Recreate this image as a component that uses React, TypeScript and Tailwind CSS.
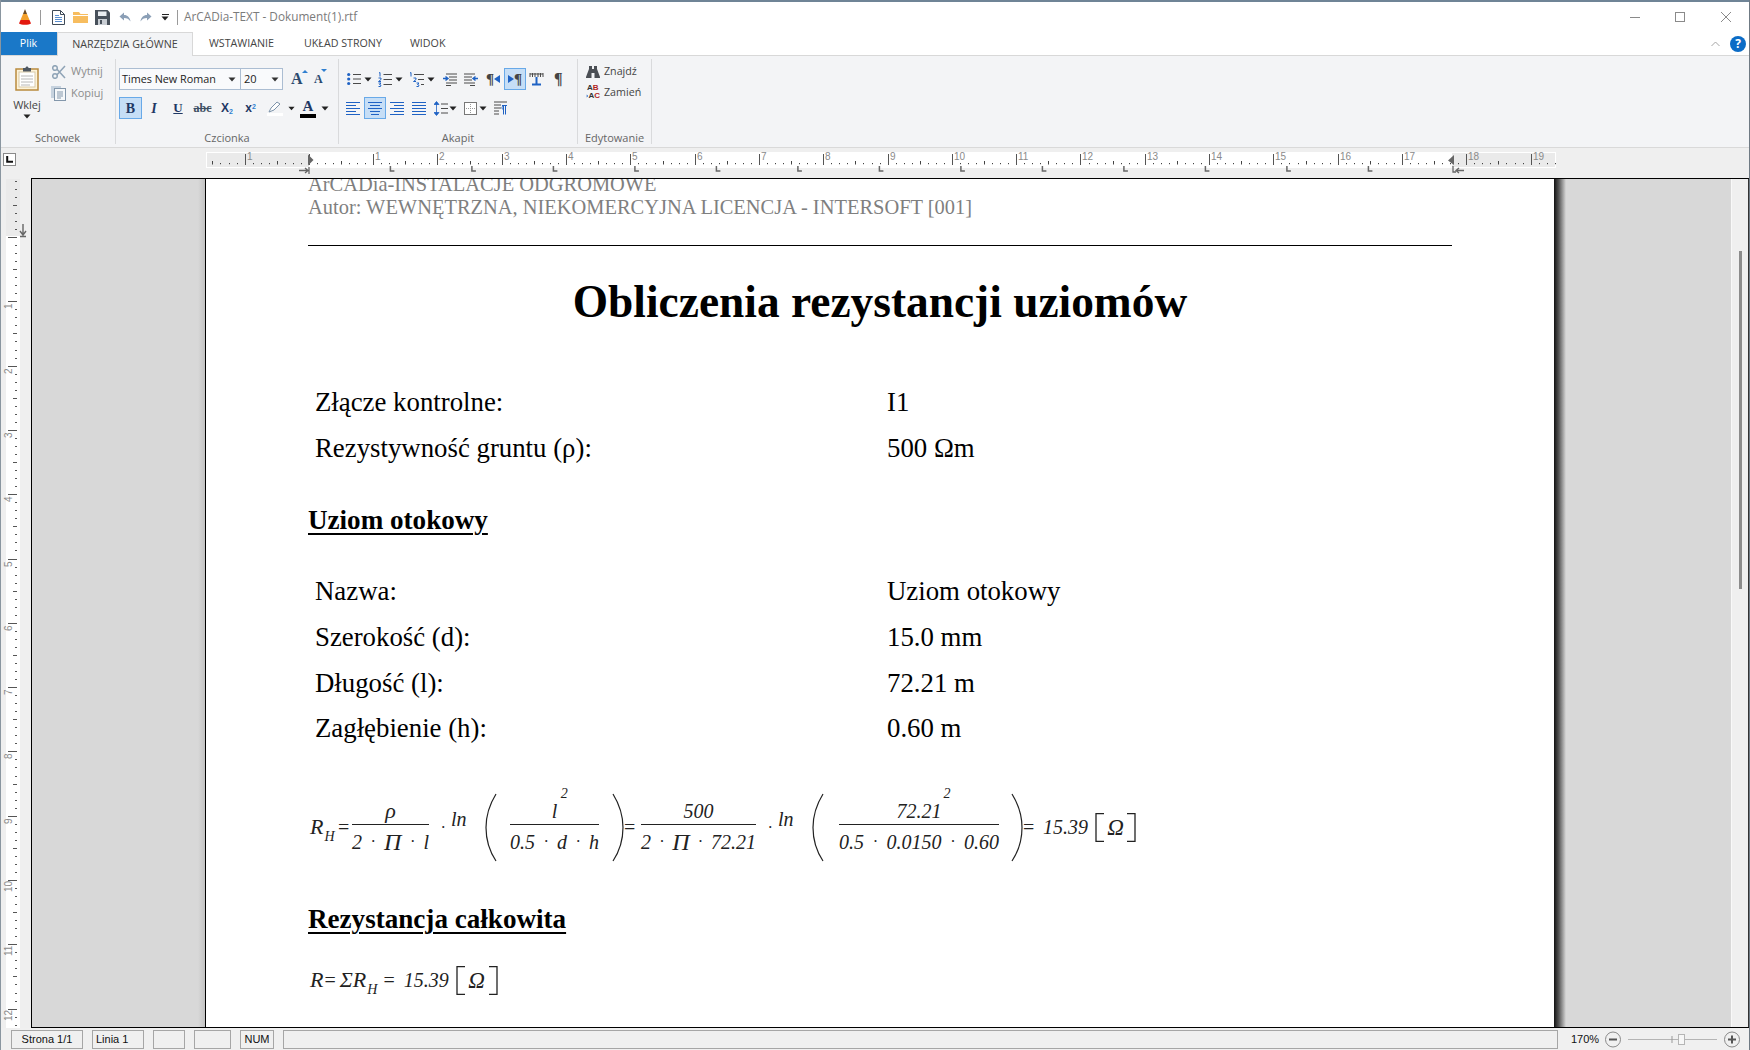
import React from "react";

const BL = "#1f62c4";
const DG = "#4a4a4a";

const Caret = ({ c = "#222" }: { c?: string }) => (
  <svg width="8" height="5" viewBox="0 0 8 5"><path d="M0.5 0.5H7.5L4 4.5Z" fill={c} /></svg>
);

const Cone = () => (
  <svg width="14" height="16" viewBox="0 0 14 16">
    <path d="M7 0 L9 5 H5Z" fill="#6b4a22" />
    <path d="M5 5H9L11.5 11H2.5Z" fill="#f3a02b" />
    <path d="M2.5 11H11.5L13 14.5C11 16.2 3 16.2 1 14.5Z" fill="#e3190f" />
  </svg>
);
const DocIcon = () => (
  <svg width="13" height="15" viewBox="0 0 13 15">
    <path d="M1 .5H8.5L12.5 4.5V14.5H.5V.5Z" fill="#fff" stroke="#3f4b58" />
    <path d="M8.5 .5V4.5H12.5" fill="none" stroke="#3f4b58" />
    <path d="M3 5.5H7M3 7.5H10M3 9.5H10M3 11.5H10" stroke="#5b8fd0" />
  </svg>
);
const FolderIcon = () => (
  <svg width="15" height="12" viewBox="0 0 15 12">
    <path d="M0 1H6L7.5 3H15V12H0Z" fill="#f7bd5f" />
    <path d="M0 4.5H15" stroke="#fff" />
  </svg>
);
const SaveIcon = () => (
  <svg width="15" height="15" viewBox="0 0 15 15">
    <path d="M0 0H12.5L15 2.5V15H0Z" fill="#48515b" />
    <rect x="3" y="1.5" width="8.5" height="4.5" fill="#e9edf1" />
    <rect x="3" y="9" width="9" height="6" fill="#c9ced4" />
    <rect x="5" y="10" width="2" height="4" fill="#48515b" />
  </svg>
);
const Arrow = ({ flip }: { flip?: boolean }) => (
  <svg width="12" height="10" viewBox="0 0 12 10" className={flip ? "-scale-x-100" : ""}>
    <path d="M5 0.5 L0.5 4.5 L5 8.5 V6 C8 6 10 7 11.5 9.5 C11 5.5 8.5 3 5 3Z" fill="#8b9fb6" />
  </svg>
);
const Clipboard = () => (
  <svg width="24" height="25" viewBox="0 0 24 25">
    <rect x="1" y="3" width="22" height="21" fill="#fdf3d9" stroke="#b98a3e" strokeWidth="1.5" />
    <rect x="4" y="6" width="16" height="15" fill="#fff" stroke="#d8c9a8" />
    <path d="M6 10H18M6 13H18M6 16H18M6 19H15" stroke="#b8b8b8" />
    <path d="M8 3.5V2H10.5C10.5 0 13.5 0 13.5 2H16V5.5H8Z" fill="#4e5761" />
  </svg>
);
const Scissors = () => (
  <svg width="14" height="14" viewBox="0 0 14 14" fill="none" stroke="#8ea3b6" strokeWidth="1.5">
    <circle cx="3" cy="3" r="2.3" />
    <circle cx="3" cy="11" r="2.3" />
    <path d="M5 4.2 L13 13M5 9.8 L13 1" />
  </svg>
);
const CopyIcon = () => (
  <svg width="15" height="15" viewBox="0 0 15 15">
    <rect x="0" y="0" width="10" height="12" fill="#c6d2de" />
    <rect x="3.5" y="2.5" width="11" height="12" fill="#f6f8fa" stroke="#8397ab" />
    <path d="M6 6H12M6 8H12M6 10H12M6 12H10" stroke="#8397ab" />
  </svg>
);
const Bullets = () => (
  <svg width="14" height="14" viewBox="0 0 14 14">
    <circle cx="1.7" cy="2.5" r="1.6" fill={BL} /><circle cx="1.7" cy="7" r="1.6" fill={BL} /><circle cx="1.7" cy="11.5" r="1.6" fill={BL} />
    <path d="M6 2.5H14M6 7H14M6 11.5H14" stroke={DG} />
  </svg>
);
const Numbered = () => (
  <svg width="14" height="15" viewBox="0 0 14 15">
    <path d="M1 1L2 .5V4.5M.5 6H3V7.5L.5 9.5H3M.5 11H3L1.5 12.5L3 13.2L2.5 14.5H.5" stroke={BL} fill="none" />
    <path d="M5.5 2.5H14M5.5 7.5H14M5.5 12.5H14" stroke={DG} />
  </svg>
);
const Multi = () => (
  <svg width="14" height="15" viewBox="0 0 14 15">
    <path d="M0 1L1 .5V4.5M3.5 6H6V7.5L3.5 9.5H6M6.5 11H9L7.5 12.5L9 13.2L8.5 14.5H6.5" stroke={BL} fill="none" />
    <path d="M4 2.5H14M8 7.5H14M11 12.5H14" stroke={DG} />
  </svg>
);
const Indent = ({ rev }: { rev?: boolean }) => (
  <svg width="14" height="13" viewBox="0 0 14 13" className={rev ? "-scale-x-100" : ""}>
    <path d="M3 1H14M6 4H14M6 7H14M3 10H14M3 12.5H8" stroke={DG} />
    <path d="M0 5.5H4M2.5 3.5L5 5.5L2.5 7.5" stroke={BL} fill="none" strokeWidth="1.4" />
  </svg>
);
const AlignIcon = ({ kind }: { kind: "l" | "c" | "r" | "j" }) => {
  const d = {
    l: "M0 1.5H14M0 4.5H10M0 7.5H14M0 10.5H10M0 13.5H14",
    c: "M0 1.5H14M2 4.5H12M0 7.5H14M2 10.5H12M3 13.5H11",
    r: "M0 1.5H14M4 4.5H14M0 7.5H14M4 10.5H14M0 13.5H14",
    j: "M0 1.5H14M0 4.5H14M0 7.5H14M0 10.5H14M0 13.5H14",
  }[kind];
  return <svg width="14" height="15" viewBox="0 0 14 15"><path d={d} stroke={BL} /></svg>;
};
const Spacing = () => (
  <svg width="14" height="15" viewBox="0 0 14 15">
    <path d="M2.5 2V13M0 3.5L2.5 0.5L5 3.5ZM0 11.5L2.5 14.5L5 11.5Z" stroke={BL} fill={BL} strokeWidth=".8" />
    <path d="M7 3H14M7 7.5H14M7 12H14" stroke={DG} />
  </svg>
);
const Borders = () => (
  <svg width="13" height="13" viewBox="0 0 13 13">
    <rect x=".5" y=".5" width="12" height="12" fill="#fff" stroke="#777" />
    <path d="M6.5 2V11M2 6.5H11" stroke="#999" strokeDasharray="1 1" />
  </svg>
);
const Para = () => (
  <svg width="13" height="14" viewBox="0 0 13 14">
    <path d="M0 1H13M0 4H7M0 7H7M0 10H5M0 13H5" stroke={DG} />
    <path d="M8 4.5H13M9.5 5V13.5M11.5 5V13.5M9.5 5C7.5 5 7.5 8.5 9.5 8.5" stroke={BL} fill="none" />
  </svg>
);
const TBar = () => (
  <svg width="15" height="13" viewBox="0 0 15 13">
    <path d="M1 0V4M3.5 0V4M6 0V4M9 0V4M11.5 0V4M14 0V4" stroke={DG} />
    <path d="M1 1H14" stroke={DG} />
    <path d="M7.5 4V11M3 11.5H12" stroke={BL} strokeWidth="2" />
  </svg>
);
const Binoculars = () => (
  <svg width="14" height="12" viewBox="0 0 14 12" fill="#4b4f55">
    <path d="M3 0H6V3H8V0H11V3L14 11V12H8.5V7H5.5V12H0V11L3 3Z" />
  </svg>
);

const Sep = () => <div className="w-px my-[3px] bg-[#d9dadc] shrink-0" />;
const GroupLabel = ({ children }: { children: React.ReactNode }) => (
  <div className="h-[17px] flex items-center justify-center text-[11px] text-[#666666]">{children}</div>
);

const HRuler = () => {
  const o = 308.9 - 205;
  const u = 64.3;
  const marks = [];
  for (let k = -13; k < 156; k++) {
    const x = o + (k * u) / 8;
    if (x > 1350) break;
    const full = k % 8 === 0;
    const half = k % 4 === 0;
    marks.push(
      <rect key={k} x={Math.round(x)} y={full ? 6 : half ? 13 : 15} width="1" height={full ? 11 : half ? 3.5 : 1.2} fill={full ? "#555" : "#444"} />
    );
  }
  const nums = [-1, 1, 2, 3, 4, 5, 6, 7, 8, 9, 10, 11, 12, 13, 14, 15, 16, 17, 18, 19];
  const tabs = Array.from({ length: 13 }, (_, i) => o + 81.5 * (i + 1));
  return (
    <svg width="1275" height="30" viewBox="0 0 1360 30" className="w-[1360px] h-[30px] block">
      <rect x="1" y="4" width="1350" height="16" fill="#fff" />
      <rect x="2" y="5" width="102" height="14" fill="#eaeaea" />
      <rect x="1247" y="5" width="103" height="14" fill="#eaeaea" />
      {marks}
      {nums.map((n) => (
        <text key={n} x={Math.round(o + n * u) + 2} y="12" fontSize="10" fill="#8a8a8a" fontFamily="Liberation Sans, sans-serif">
          {Math.abs(n)}
        </text>
      ))}
      {tabs.map((x) => (
        <path key={x} d={`M${x} 18V23H${x + 4}`} stroke="#666" strokeWidth="1.5" fill="none" />
      ))}
      <path d="M103 6.5L108.5 12L103 17.5Z" fill="#666" />
      <path d="M94 22.5H103M100 20L103 22.5L100 25M104 19V26" stroke="#666" strokeWidth="1.3" fill="none" />
      <path d="M1249 7L1243 12.5L1249 17Z" fill="#666" />
      <path d="M1248 18V24H1251M1251 22.5H1259M1254 20L1251 22.5L1254 25" stroke="#666" strokeWidth="1.3" fill="none" />
    </svg>
  );
};

const VRuler = () => {
  const o = 236 - 178;
  const u = 64.3;
  const marks = [];
  for (let k = -7; k < 100; k++) {
    const y = o + (k * u) / 8;
    if (y > 848) break;
    const full = k % 8 === 0;
    const half = k % 4 === 0;
    marks.push(
      <rect key={k} x={full ? 8 : half ? 13 : 15} y={Math.round(y)} width={full ? 9 : half ? 4 : 2} height="1" fill="#555" />
    );
  }
  return (
    <svg width="31" height="849" viewBox="0 0 31 849" className="block">
      <rect x="6" y="0" width="14" height="849" fill="#fff" />
      <rect x="6" y="0" width="14" height="57" fill="#eaeaea" />
      {marks}
      {Array.from({ length: 12 }, (_, i) => i + 1).map((n) => (
        <text key={n} fontSize="10" fill="#8a8a8a" fontFamily="Liberation Sans, sans-serif" transform={`translate(12 ${Math.round(o + n * u) + (n > 9 ? 12 : 8)}) rotate(-90)`}>
          {n}
        </text>
      ))}
      <path d="M23 45V56M20 52L23 56L26 52M20 57.5H26" stroke="#666" strokeWidth="1.4" fill="none" />
    </svg>
  );
};

const Frac = ({ w, num, den }: { w: string; num: React.ReactNode; den: React.ReactNode }) => (
  <div className={"flex flex-col shrink-0 " + w}>
    <div className="h-[27px] flex items-center justify-center border-b border-[#222222] relative pb-[1px]">{num}</div>
    <div className="h-[31px] flex items-center justify-between pt-[2px]">{den}</div>
  </div>
);
const Paren = ({ flip }: { flip?: boolean }) => (
  <svg width="12" height="69" viewBox="0 0 12 69" className={"shrink-0 " + (flip ? "-scale-x-100" : "")}>
    <path d="M11 1C3 14 1 24 1 34.5C1 45 3 56 11 68" stroke="#222" strokeWidth="1.2" fill="none" />
  </svg>
);
const Bracket = ({ flip }: { flip?: boolean }) => (
  <svg width="9" height="29" viewBox="0 0 9 29" className={"shrink-0 " + (flip ? "-scale-x-100" : "")}>
    <path d="M9 .7H1V28.3H9" stroke="#222" strokeWidth="1.3" fill="none" />
  </svg>
);
const Dot = () => <span className="text-[16px]">·</span>;
const Pi = () => <span className="text-[24px] leading-none">Π</span>;

const Ln = () => (
  <div className="w-[56px] shrink-0 flex items-center h-[72px]">
    <span className="ml-[12px] mt-[2px] text-[16px]">·</span>
    <span className="ml-[6px] -mt-[16px]">ln</span>
  </div>
);

const Row = ({ a, b }: { a: React.ReactNode; b: React.ReactNode }) => (
  <div className="grid grid-cols-[572px_1fr] h-[45.7px] items-center pl-[7px]">
    <div>{a}</div>
    <div>{b}</div>
  </div>
);

export default function App() {
  return (
    <div className="relative w-[1750px] h-[1050px] overflow-hidden bg-[#efefef] flex flex-col font-['Open_Sans',sans-serif] text-[#444444]">
      {/* title bar */}
      <div className="h-[2px] bg-[#6f8496] shrink-0" />
      <div className="h-[30px] bg-white flex items-center shrink-0">
        <div className="ml-[18px] w-[14px] flex"><Cone /></div>
        <div className="ml-[8px] w-px h-[15px] bg-[#9a9a9a]" />
        <div className="ml-[11px] w-[13px] flex"><DocIcon /></div>
        <div className="ml-[8px] w-[15px] flex"><FolderIcon /></div>
        <div className="ml-[7px] w-[15px] flex"><SaveIcon /></div>
        <div className="ml-[9px] w-[12px] flex"><Arrow /></div>
        <div className="ml-[9px] w-[12px] flex"><Arrow flip /></div>
        <div className="ml-[9px] w-[8px] flex flex-col items-center gap-[1px]"><div className="w-[7px] h-px bg-[#222222]" /><Caret /></div>
        <div className="ml-[8px] w-px h-[15px] bg-[#9a9a9a]" />
        <div className="ml-[6px] text-[11.8px] text-[#7b7b7b]">ArCADia-TEXT - Dokument(1).rtf</div>
        <div className="ml-auto flex items-center text-[#8a8a8a]">
          <div className="w-[10px] h-px bg-[#8a8a8a]" />
          <div className="ml-[35px] w-[10px] h-[10px] border border-[#8a8a8a]" />
          <svg className="ml-[36px] mr-[19px]" width="10" height="10" viewBox="0 0 10 10"><path d="M0 0L10 10M10 0L0 10" stroke="#8a8a8a" /></svg>
        </div>
      </div>
      {/* tabs */}
      <div className="h-[24px] bg-white flex items-stretch border-b border-[#d8d8d8] shrink-0 text-[10.7px] text-[#444444]">
        <div className="w-[57px] h-[23px] bg-[#1a78c8] text-white flex items-center justify-center">Plik</div>
        <div className="w-[136px] h-[24px] bg-[#f3f4f6] border border-b-0 border-[#d8d8d8] flex items-center justify-center -mb-px">NARZĘDZIA GŁÓWNE</div>
        <div className="ml-[16px] w-[95px] flex items-center">WSTAWIANIE</div>
        <div className="w-[106px] flex items-center">UKŁAD STRONY</div>
        <div className="flex items-center">WIDOK</div>
        <div className="ml-auto flex items-center">
          <svg width="9" height="6" viewBox="0 0 9 6"><path d="M.5 5L4.5 1L8.5 5" stroke="#a5a5a5" fill="none" /></svg>
          <div className="ml-[10px] mr-[4px] w-[16px] h-[16px] rounded-full bg-[#0b6cc6] text-white text-[12px] font-bold flex items-center justify-center">?</div>
        </div>
      </div>
      {/* ribbon */}
      <div className="h-[92px] bg-[#f3f4f6] border-b border-[#d9d9d9] flex shrink-0">
        {/* schowek */}
        <div className="w-[115px] flex flex-col shrink-0">
          <div className="flex-1 flex">
            <div className="ml-[13px] w-[28px] flex flex-col items-center pt-[10px]">
              <Clipboard />
              <div className="text-[11px] mt-[6px] leading-[16px] text-[#444444]">Wklej</div>
              <div className="mt-[1px]"><Caret /></div>
            </div>
            <div className="ml-[11px] flex flex-col pt-[8px] text-[11px] text-[#8c8c8c]">
              <div className="h-[15px] flex items-center"><Scissors /><span className="ml-[5px]">Wytnij</span></div>
              <div className="h-[16px] mt-[6px] flex items-center -ml-[1px]"><CopyIcon /><span className="ml-[5px]">Kopiuj</span></div>
            </div>
          </div>
          <GroupLabel>Schowek</GroupLabel>
        </div>
        <Sep />
        {/* czcionka */}
        <div className="w-[222px] flex flex-col shrink-0">
          <div className="flex-1 pt-[12px] pl-[3px] flex flex-col gap-[7px]">
            <div className="h-[22px] flex items-center">
              <div className="w-[122px] h-[22px] bg-[#f9fafc] border border-[#abbdd2] flex items-center pl-[2px] text-[10.8px] text-[#222222]">
                <span>Times New Roman</span><span className="ml-auto mr-[4px]"><Caret c="#333" /></span>
              </div>
              <div className="w-[43px] h-[22px] -ml-px bg-[#f9fafc] border border-[#abbdd2] flex items-center pl-[3px] text-[11px] text-[#222222]">
                <span>20</span><span className="ml-auto mr-[3px]"><Caret c="#333" /></span>
              </div>
              <div className="ml-[8px] w-[14px] relative font-['Liberation_Serif',serif] font-bold text-[16px] text-[#2b4a6e] leading-none">A<span className="absolute -top-[1px] left-[11px] w-0 h-0 border-x-[3px] border-b-[3px] border-x-transparent border-b-[#2f7fd0]" /></div>
              <div className="ml-[9px] w-[12px] relative font-['Liberation_Serif',serif] font-bold text-[12px] text-[#2b4a6e] leading-none">A<span className="absolute -top-[4px] left-[7px] w-0 h-0 border-x-[3px] border-t-[3px] border-x-transparent border-t-[#2f7fd0]" /></div>
            </div>
            <div className="h-[22px] flex items-center text-[#1f3864]">
              <div className="w-[23px] h-[22px] bg-[#c6def6] border border-[#68a9e8] flex items-center justify-center font-['Liberation_Serif',serif] font-bold text-[14px]">B</div>
              <div className="w-[24px] flex justify-center font-['Liberation_Serif',serif] italic font-bold text-[14px]">I</div>
              <div className="w-[24px] flex justify-center font-['Liberation_Serif',serif] font-bold underline text-[13px]">U</div>
              <div className="w-[25px] flex justify-center font-['Liberation_Serif',serif] font-bold line-through text-[12px] text-[#3d4f63]">abc</div>
              <div className="w-[24px] text-center font-['Liberation_Sans',sans-serif] font-bold text-[12px]">X<sub className="text-[7px] text-[#2f7fd0]">2</sub></div>
              <div className="w-[23px] text-center font-['Liberation_Sans',sans-serif] font-bold text-[12px]">x<sup className="text-[7px] text-[#2f7fd0]">2</sup></div>
              <div className="w-[26px] flex flex-col items-center">
                <svg width="14" height="12" viewBox="0 0 14 12"><path d="M1 11L3 7L9 1L12 3L6 9L1 11Z" fill="#fff" stroke="#7d93aa" /></svg>
                <div className="w-[16px] h-[3px] bg-white" />
              </div>
              <div className="w-[7px] flex justify-center"><Caret /></div>
              <div className="w-[26px] flex flex-col items-center font-['Liberation_Serif',serif] font-bold text-[15px] leading-[15px]">A<div className="w-[16px] h-[4px] bg-black" /></div>
              <div className="w-[8px] flex justify-center"><Caret /></div>
            </div>
          </div>
          <GroupLabel>Czcionka</GroupLabel>
        </div>
        <Sep />
        {/* akapit */}
        <div className="w-[238px] flex flex-col shrink-0">
          <div className="flex-1 pt-[12px] flex flex-col gap-[7px]">
            <div className="h-[22px] flex items-center">
              <div className="ml-[8px] w-[14px] flex"><Bullets /></div>
              <div className="ml-[3px] w-[8px] flex"><Caret /></div>
              <div className="ml-[6px] w-[14px] flex"><Numbered /></div>
              <div className="ml-[3px] w-[8px] flex"><Caret /></div>
              <div className="ml-[7px] w-[14px] flex"><Multi /></div>
              <div className="ml-[3px] w-[8px] flex"><Caret /></div>
              <div className="ml-[8px] w-[14px] flex"><Indent /></div>
              <div className="ml-[7px] w-[14px] flex"><Indent rev /></div>
              <div className="ml-[8px] w-[14px] flex items-center font-['Liberation_Serif',serif] font-bold text-[15px] text-[#444444] leading-none">¶<span className="w-0 h-0 border-y-[4px] border-r-[6px] border-y-transparent border-r-[#1f62c4]" /></div>
              <div className="ml-[4px] w-[22px] h-[22px] bg-[#c6def6] border border-[#68a9e8] flex items-center justify-center font-['Liberation_Serif',serif] font-bold text-[15px] text-[#444444] leading-none"><span className="w-0 h-0 border-y-[4px] border-l-[6px] border-y-transparent border-l-[#1f62c4]" />¶</div>
              <div className="ml-[3px] w-[15px] flex"><TBar /></div>
              <div className="ml-[10px] w-[10px] flex font-['Liberation_Serif',serif] font-bold text-[16px] text-[#444444] leading-none">¶</div>
            </div>
            <div className="h-[22px] flex items-center">
              <div className="ml-[7px] w-[14px] flex"><AlignIcon kind="l" /></div>
              <div className="ml-[4px] w-[22px] h-[22px] bg-[#c6def6] border border-[#68a9e8] flex items-center justify-center"><AlignIcon kind="c" /></div>
              <div className="ml-[4px] w-[14px] flex"><AlignIcon kind="r" /></div>
              <div className="ml-[8px] w-[14px] flex"><AlignIcon kind="j" /></div>
              <div className="ml-[8px] w-[14px] flex"><Spacing /></div>
              <div className="ml-[1px] w-[8px] flex"><Caret /></div>
              <div className="ml-[7px] w-[14px] flex"><Borders /></div>
              <div className="ml-[1px] w-[8px] flex"><Caret /></div>
              <div className="ml-[7px] w-[14px] flex"><Para /></div>
            </div>
          </div>
          <GroupLabel>Akapit</GroupLabel>
        </div>
        <Sep />
        {/* edytowanie */}
        <div className="w-[73px] flex flex-col shrink-0">
          <div className="flex-1 pt-[8px] pl-[8px] flex flex-col text-[10.7px] text-[#444444]">
            <div className="h-[15px] flex items-center"><Binoculars /><span className="ml-[4px]">Znajdź</span></div>
            <div className="h-[16px] mt-[5px] flex items-center">
              <div className="w-[14px] shrink-0 flex flex-col font-['Liberation_Sans',sans-serif] font-bold text-[8px] leading-[8px]">
                <span className="text-[#333333] pl-[1px]">A<span className="text-[#b01e1e]">B</span></span>
                <span className="flex items-center">
                  <svg width="4" height="6" viewBox="0 0 4 6"><path d="M0 3H3M1.5 1L3.5 3L1.5 5" stroke="#1f62c4" fill="none" /></svg>
                  <span className="text-[#333333]">A<span className="text-[#b01e1e]">C</span></span>
                </span>
              </div>
              <span className="ml-[4px]">Zamień</span>
            </div>
          </div>
          <GroupLabel>Edytowanie</GroupLabel>
        </div>
        <Sep />
      </div>
      {/* ruler row */}
      <div className="h-[30px] flex shrink-0">
        <div className="ml-[3px] mt-[5px] w-[13px] h-[13px] bg-white border border-[#8a8a8a] flex items-center justify-center shrink-0">
          <svg width="7" height="7" viewBox="0 0 7 7"><path d="M1.2 0V5.8H7" stroke="#111" strokeWidth="2" fill="none" /></svg>
        </div>
        <div className="ml-[189px]"><HRuler /></div>
      </div>
      {/* main */}
      <div className="h-[850px] flex shrink-0">
        <div className="w-[31px] pt-px shrink-0"><VRuler /></div>
        <div className="w-[1719px] flex border-t border-b border-l border-black border-r-2 border-r-[#333333] overflow-hidden">
          <div className="w-[173px] shrink-0 bg-[linear-gradient(to_right,#d8d8d8_96%,#c2c2c2)]" />
          <div className="w-[1349px] shrink-0 bg-white border-l border-black px-[102px] text-black font-['Liberation_Serif',serif] text-[26.8px] leading-[46px] flex flex-col">
            <div className="-mt-[6px] text-[20.45px] leading-[23px] text-[#7f7f7f]">
              <div>ArCADia-INSTALACJE ODGROMOWE</div>
              <div>Autor: WEWNĘTRZNA, NIEKOMERCYJNA LICENCJA - INTERSOFT [001]</div>
            </div>
            <div className="mt-[26px] h-px bg-black" />
            <div className="mt-[25px] h-[62px] text-center font-bold text-[45.4px] leading-[62px]">Obliczenia rezystancji uziomów</div>
            <div className="mt-[46px]">
              <Row a="Złącze kontrolne:" b="I1" />
              <Row a="Rezystywność gruntu (ρ):" b="500 Ωm" />
            </div>
            <div className="mt-[27px] font-bold text-[27.1px] underline decoration-2 underline-offset-[4px]">Uziom otokowy</div>
            <div className="mt-[25px]">
              <Row a="Nazwa:" b="Uziom otokowy" />
              <Row a="Szerokość (d):" b="15.0 mm" />
              <Row a="Długość (l):" b="72.21 m" />
              <Row a="Zagłębienie (h):" b="0.60 m" />
            </div>
            <div className="mt-[40px] h-[72px] flex items-center italic text-[20px] leading-none text-[#222222]">
              <div className="w-[30px] shrink-0 flex items-center pl-[2px]"><span className="text-[22px]">R</span><span className="text-[14px] mt-[20px] ml-[1px]">H</span></div>
              <div className="w-[14px] shrink-0 not-italic">=</div>
              <Frac w="w-[77px]" num={<span className="text-[22px]">ρ</span>} den={<><span>2</span><Dot /><Pi /><Dot /><span>l</span></>} />
              <Ln />
              <Paren />
              <div className="ml-[13px]"><Frac w="w-[89px]" num={<span className="relative">l<span className="absolute -top-[14px] left-[9px] text-[14px]">2</span></span>} den={<><span>0.5</span><Dot /><span>d</span><Dot /><span>h</span></>} /></div>
              <div className="ml-[13px]"><Paren flip /></div>
              <div className="w-[17px] shrink-0 not-italic">=</div>
              <Frac w="w-[115px]" num={<span>500</span>} den={<><span>2</span><Dot /><Pi /><Dot /><span>72.21</span></>} />
              <Ln />
              <Paren />
              <div className="ml-[15px]"><Frac w="w-[160px]" num={<span className="relative">72.21<span className="absolute -top-[14px] left-[47px] text-[14px]">2</span></span>} den={<><span>0.5</span><Dot /><span>0.0150</span><Dot /><span>0.60</span></>} /></div>
              <div className="ml-[12px]"><Paren flip /></div>
              <div className="w-[12px] shrink-0 not-italic">=</div>
              <span className="ml-[8px]">15.39</span>
              <div className="ml-[7px] w-[41px] flex items-center justify-between"><Bracket /><span className="text-[23px]">Ω</span><Bracket flip /></div>
            </div>
            <div className="mt-[33px] font-bold text-[27.1px] underline decoration-2 underline-offset-[4px]">Rezystancja całkowita</div>
            <div className="mt-[18px] h-[40px] flex items-center italic text-[20px] leading-none text-[#222222]">
              <span className="ml-[2px] text-[22px]">R</span>
              <span className="ml-[1px] not-italic">=</span>
              <span className="ml-[4px] text-[22px]">Σ</span>
              <span className="text-[22px]">R</span>
              <span className="text-[14px] mt-[20px] ml-[1px]">H</span>
              <span className="ml-[6px] not-italic">=</span>
              <span className="ml-[9px]">15.39</span>
              <div className="ml-[7px] w-[42px] flex items-center justify-between"><Bracket /><span className="text-[23px]">Ω</span><Bracket flip /></div>
            </div>
          </div>
          <div className="w-[12px] shrink-0 bg-[linear-gradient(to_right,#111111,#555555_40%,#d8d8d8)]" />
          <div className="flex-1 bg-[#d8d8d8]" />
          <div className="w-[17px] shrink-0 bg-[#efefef] border-l border-[#f8f8f8] pt-[72px] pl-[7px]">
            <div className="w-[3px] h-[338px] bg-[#8c8c8c]" />
          </div>
        </div>
      </div>
      {/* status */}
      <div className="h-[22px] pt-[2px] flex shrink-0 font-['Liberation_Sans',sans-serif] text-[11px] text-[#111111] bg-[#f0f0f0]">
        <div className="ml-[11px] w-[72px] h-[19px] border border-[#a6a6a6] flex items-center justify-center">Strona 1/1</div>
        <div className="ml-[9px] w-[52px] h-[19px] border border-[#a6a6a6] flex items-center pl-[3px]">Linia 1</div>
        <div className="ml-[9px] w-[32px] h-[19px] border border-[#a6a6a6]" />
        <div className="ml-[9px] w-[37px] h-[19px] border border-[#a6a6a6]" />
        <div className="ml-[9px] w-[34px] h-[19px] border border-[#a6a6a6] flex items-center justify-center">NUM</div>
        <div className="ml-[9px] w-[1275px] h-[19px] border border-[#a6a6a6]" />
        <div className="ml-[13px] w-[25px] h-[19px] flex items-center">170%</div>
        <svg className="ml-[9px]" width="135" height="19" viewBox="0 0 135 19">
          <circle cx="8" cy="9.5" r="7.5" fill="#f0f0f0" stroke="#8a8a8a" />
          <path d="M4 9.5H12" stroke="#555" strokeWidth="2" />
          <path d="M23 9.5H112" stroke="#b5b5b5" />
          <path d="M67 6V13" stroke="#999" />
          <rect x="73.5" y="4.5" width="6" height="10" fill="#f7f7f7" stroke="#b5b5b5" />
          <circle cx="127" cy="9.5" r="7.5" fill="#f0f0f0" stroke="#8a8a8a" />
          <path d="M123 9.5H131M127 5.5V13.5" stroke="#555" strokeWidth="2" />
        </svg>
      </div>
      <div className="absolute left-0 top-0 w-px h-full bg-[#8a96a0]" />
      <div className="absolute right-0 top-0 w-px h-full bg-[#6f7a84]" />
    </div>
  );
}
